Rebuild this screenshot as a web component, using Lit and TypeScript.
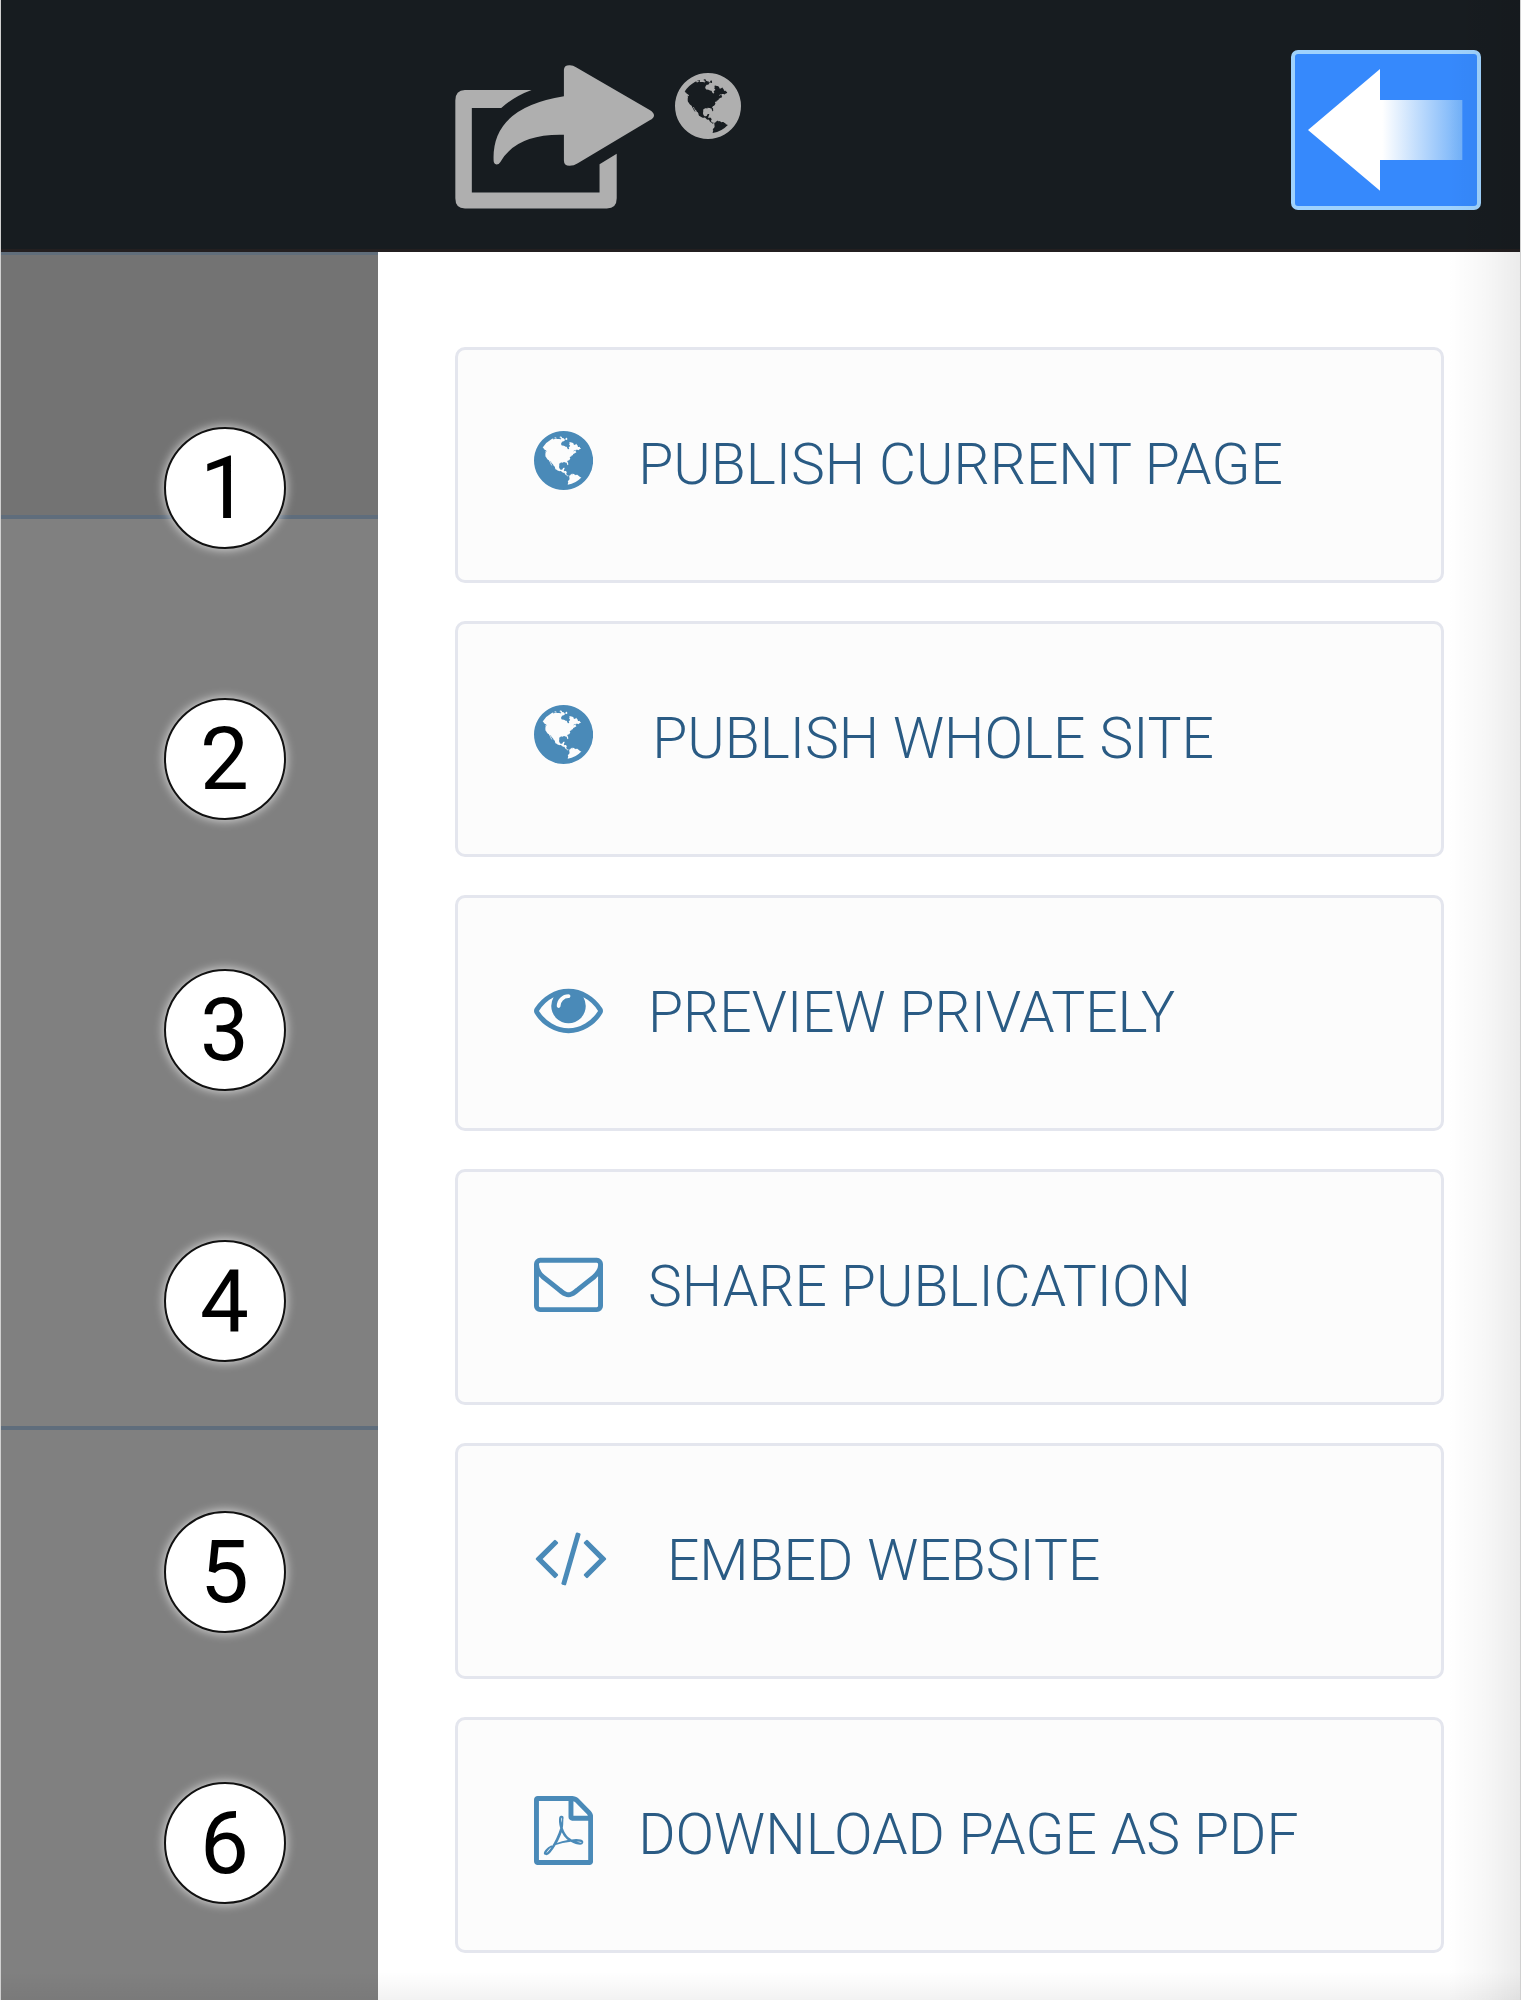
import { LitElement, html, svg, css, type SVGTemplateResult } from "lit";
import { customElement, property } from "lit/decorators.js";

interface Glyph {
  x: number;
  width: number;
  path: string;
}

/* Glyph outlines on a 1792-unit tall grid; x and width give the advance box. */
const GLYPHS: Record<string, Glyph> = {
  globe: {
    x: 128,
    width: 1536,
    path: "M896 128q209 0 385.5 103t279.5 279.5 103 385.5-103 385.5-279.5 279.5-385.5 103-385.5-103-279.5-279.5-103-385.5 103-385.5 279.5-279.5 385.5-103zm274 521q-2 1-9.5 9.5t-13.5 9.5q2 0 4.5-5t5-11 3.5-7q6-7 22-15 14-6 52-12 34-8 51 11-2-2 9.5-13t14.5-12q3-2 15-4.5t15-7.5l2-22q-12 1-17.5-7t-6.5-21q0 2-6 8 0-7-4.5-8t-11.5 1-9 1q-10-3-15-7.5t-8-16.5-4-15q-2-5-9.5-11t-9.5-10q-1-2-2.5-5.5t-3-6.5-4-5.5-5.5-2.5-7 5-7.5 10-4.5 5q-3-2-6-1.5t-4.5 1-4.5 3-5 3.5q-3 2-8.5 3t-8.5 2q15-5-1-11-10-4-16-3 9-4 7.5-12t-8.5-14h5q-1-4-8.5-8.5t-17.5-8.5-13-6q-8-5-34-9.5t-33-.5q-5 6-4.5 10.5t4 14 3.5 12.5q1 6-5.5 13t-6.5 12q0 7 14 15.5t10 21.5q-3 8-16 16t-16 12q-5 8-1.5 18.5t10.5 16.5q2 2 1.5 4t-3.5 4.5-5.5 4-6.5 3.5l-3 2q-11 5-20.5-6t-13.5-26q-7-25-16-30-23-8-29 1-5-13-41-26-25-9-58-4 6-1 0-15-7-15-19-12 3-6 4-17.5t1-13.5q3-13 12-23 1-1 7-8.5t9.5-13.5.5-6q35 4 50-11 5-5 11.5-17t10.5-17q9-6 14-5.5t14.5 5.5 14.5 5q14 1 15.5-11t-7.5-20q12 1 3-17-4-7-8-9-12-4-27 5-8 4 2 8-1-1-9.5 10.5t-16.5 17.5-16-5q-1-1-5.5-13.5t-9.5-13.5q-8 0-16 15 3-8-11-15t-24-8q19-12-8-27-7-4-20.5-5t-19.5 4q-5 7-5.5 11.5t5 8 10.5 5.5 11.5 4 8.5 3q14 10 8 14-2 1-8.5 3.5t-11.5 4.5-6 4q-3 4 0 14t-2 14q-5-5-9-17.5t-7-16.5q7 9-25 6l-10-1q-4 0-16 2t-20.5 1-13.5-8q-4-8 0-20 1-4 4-2-4-3-11-9.5t-10-8.5q-46 15-94 41 6 1 12-1 5-2 13-6.5t10-5.5q34-14 42-7l5-5q14 16 20 25-7-4-30-1-20 6-22 12 7 12 5 18-4-3-11.5-10t-14.5-11-15-5q-16 0-22 1-146 80-235 222 7 7 12 8 4 1 5 9t2.5 11 11.5-3q9 8 3 19 1-1 44 27 19 17 21 21 3 11-10 18-1-2-9-9t-9-4q-3 5 .5 18.5t10.5 12.5q-7 0-9.5 16t-2.5 35.5-1 23.5l2 1q-3 12 5.5 34.5t21.5 19.5q-13 3 20 43 6 8 8 9 3 2 12 7.5t15 10 10 10.5q4 5 10 22.5t14 23.5q-2 6 9.5 20t10.5 23q-1 0-2.5 1t-2.5 1q3 7 15.5 14t15.5 13q1 3 2 10t3 11 8 2q2-20-24-62-15-25-17-29-3-5-5.5-15.5t-4.5-14.5q2 0 6 1.5t8.5 3.5 7.5 4 2 3q-3 7 2 17.5t12 18.5 17 19 12 13q6 6 14 19.5t0 13.5q9 0 20 10.5t17 19.5q5 8 8 26t5 24q2 7 8.5 13.5t12.5 9.5l16 8 13 7q5 2 18.5 10.5t21.5 11.5q10 4 16 4t14.5-2.5 13.5-3.5q15-2 29 15t21 21q36 19 55 11-2 1 .5 7.5t8 15.5 9 14.5 5.5 8.5q5 6 18 15t18 15q6-4 7-9-3 8 7 20t18 10q14-3 14-32-31 15-49-18 0-1-2.5-5.5t-4-8.5-2.5-8.5 0-7.5 5-3q9 0 10-3.5t-2-12.5-4-13q-1-8-11-20t-12-15q-5 9-16 8t-16-9q0 1-1.5 5.5t-1.5 6.5q-13 0-15-1 1-3 2.5-17.5t3.5-22.5q1-4 5.5-12t7.5-14.5 4-12.5-4.5-9.5-17.5-2.5q-19 1-26 20-1 3-3 10.5t-5 11.5-9 7q-7 3-24 2t-24-5q-13-8-22.5-29t-9.5-37q0-10 2.5-26.5t3-25-5.5-24.5q3-2 9-9.5t10-10.5q2-1 4.5-1.5t4.5 0 4-1.5 3-6q-1-1-4-3-3-3-4-3 7 3 28.5-1.5t27.5 1.5q15 11 22-2 0-1-2.5-9.5t-.5-13.5q5 27 29 9 3 3 15.5 5t17.5 5q3 2 7 5.5t5.5 4.5 5-.5 8.5-6.5q10 14 12 24 11 40 19 44 7 3 11 2t4.5-9.5 0-14-1.5-12.5l-1-8v-18l-1-8q-15-3-18.5-12t1.5-18.5 15-18.5q1-1 8-3.5t15.5-6.5 12.5-8q21-19 15-35 7 0 11-9-1 0-5-3t-7.5-5-4.5-2q9-5 2-16 5-3 7.5-11t7.5-10q9 12 21 2 7-8 1-16 5-7 20.5-10.5t18.5-9.5q7 2 8-2t1-12 3-12q4-5 15-9t13-5l17-11q3-4 0-4 18 2 31-11 10-11-6-20 3-6-3-9.5t-15-5.5q3-1 11.5-.5t10.5-1.5q15-10-7-16-17-5-43 12zm-163 877q206-36 351-189-3-3-12.5-4.5t-12.5-3.5q-18-7-24-8 1-7-2.5-13t-8-9-12.5-8-11-7q-2-2-7-6t-7-5.5-7.5-4.5-8.5-2-10 1l-3 1q-3 1-5.5 2.5t-5.5 3-4 3 0 2.5q-21-17-36-22-5-1-11-5.5t-10.5-7-10-1.5-11.5 7q-5 5-6 15t-2 13q-7-5 0-17.5t2-18.5q-3-6-10.5-4.5t-12 4.5-11.5 8.5-9 6.5-8.5 5.5-8.5 7.5q-3 4-6 12t-5 11q-2-4-11.5-6.5t-9.5-5.5q2 10 4 35t5 38q7 31-12 48-27 25-29 40-4 22 12 26 0 7-8 20.5t-7 21.5q0 6 2 16z",
  },
  eye: {
    x: 0,
    width: 1792,
    path: "M1664 960q-152-236-381-353 61 104 61 225 0 185-131.5 316.5t-316.5 131.5-316.5-131.5-131.5-316.5q0-121 61-225-229 117-381 353 133 205 333.5 326.5t434.5 121.5 434.5-121.5 333.5-326.5zm-720-384q0-20-14-34t-34-14q-125 0-214.5 89.5t-89.5 214.5q0 20 14 34t34 14 34-14 14-34q0-86 61-147t147-61q20 0 34-14t14-34zm848 384q0 34-20 69-140 230-376.5 368.5t-499.5 138.5-499.5-139-376.5-368q-20-35-20-69t20-69q140-229 376.5-368t499.5-139 499.5 139 376.5 368q20 35 20 69z",
  },
  envelope: {
    x: 0,
    width: 1792,
    path: "M1664 1504v-768q-32 36-69 66-268 206-426 338-51 43-83 67t-86.5 48.5-102.5 24.5h-2q-48 0-102.5-24.5t-86.5-48.5-83-67q-158-132-426-338-37-30-69-66v768q0 13 9.5 22.5t22.5 9.5h1472q13 0 22.5-9.5t9.5-22.5zm0-1051v-24.5l-.5-13-3-12.5-5.5-9-9-7.5-14-2.5h-1472q-13 0-22.5 9.5t-9.5 22.5q0 168 147 284 193 152 401 317 6 5 35 29.5t46 37.5 44.5 31.5 50.5 27.5 43 9h2q20 0 43-9t50.5-27.5 44.5-31.5 46-37.5 35-29.5q208-165 401-317 54-43 100.5-115.5t46.5-131.5zm128-37v1088q0 66-47 113t-113 47h-1472q-66 0-113-47t-47-113v-1088q0-66 47-113t113-47h1472q66 0 113 47t47 113z",
  },
  code: {
    x: 0,
    width: 1920,
    path: "M617 1399l-50 50q-10 10-23 10t-23-10l-466-466q-10-10-10-23t10-23l466-466q10-10 23-10t23 10l50 50q10 10 10 23t-10 23l-393 393 393 393q10 10 10 23t-10 23zm591-1067l-373 1291q-4 13-15.5 19.5t-23.5 2.5l-62-17q-13-4-19.5-15.5t-2.5-24.5l373-1291q4-13 15.5-19.5t23.5-2.5l62 17q13 4 19.5 15.5t2.5 24.5zm657 651l-466 466q-10 10-23 10t-23-10l-50-50q-10-10-10-23t10-23l393-393-393-393q-10-10-10-23t10-23l50-50q10-10 23-10t23 10l466 466q10 10 10 23t-10 23z",
  },
  pdf: {
    x: 128,
    width: 1536,
    path: "M1596 380q28 28 48 76t20 88v1152q0 40-28 68t-68 28h-1344q-40 0-68-28t-28-68v-1600q0-40 28-68t68-28h896q40 0 88 20t76 48zm-444-244v376h376q-10-29-22-41l-313-313q-12-12-41-22zm384 1528v-1024h-416q-40 0-68-28t-28-68v-416h-768v1536h1280zm-514-593q33 26 84 56 59-7 117-7 147 0 177 49 16 22 2 52 0 1-1 2l-2 2v1q-6 38-71 38-48 0-115-20t-130-53q-221 24-392 83-153 262-242 262-15 0-28-7l-24-12q-1-1-6-5-10-10-6-36 9-40 56-91.5t132-96.5q14-9 23 6 2 2 2 4 52-85 107-197 68-136 104-262-24-82-30.5-159.5t6.5-127.5q11-40 42-40h22q23 0 35 15 18 21 9 68-2 6-4 8 1 3 1 8v30q-2 123-14 192 55 164 146 238zm-576 411q52-24 137-158-51 40-87.5 84t-49.5 74zm398-920q-15 42-2 132 1-7 7-44 0-3 7-43 1-4 4-8-1-1-1-2t-1-2q-1-22-13-36 0 1-1 2v2zm-124 661q135-54 284-81-2-1-13-9.5t-16-13.5q-76-67-127-176-27 86-83 197-30 56-45 83zm646-16q-24-24-140-24 76 28 124 28 14 0 18-1 0-1-2-3z",
  },
};

const glyph = (name: string): SVGTemplateResult => {
  const g = GLYPHS[name];
  return svg`<svg class="glyph" aria-hidden="true" viewBox="${g.x} 0 ${g.width} 1792"><path d="${g.path}"></path></svg>`;
};

interface Action {
  label: string;
  icon: string;
  spaced?: boolean;
}

const ACTIONS: Action[] = [
  { label: "PUBLISH CURRENT PAGE", icon: "globe" },
  { label: "PUBLISH WHOLE SITE", icon: "globe", spaced: true },
  { label: "PREVIEW PRIVATELY", icon: "eye" },
  { label: "SHARE PUBLICATION", icon: "envelope" },
  { label: "EMBED WEBSITE", icon: "code", spaced: true },
  { label: "DOWNLOAD PAGE AS PDF", icon: "pdf" },
];

@customElement("panel-header")
export class PanelHeader extends LitElement {
  static styles = css`
    :host {
      display: block;
    }
    .bar {
      box-sizing: border-box;
      display: flex;
      align-items: flex-start;
      justify-content: space-between;
      min-height: 252px;
      padding: 50px 39px 38px 454px;
      background: #171c20;
      border-bottom: 3px solid #231f20;
    }
    .title {
      display: flex;
      align-items: flex-start;
      gap: 20px;
      margin-top: 14px;
      fill: #afafaf;
    }
    .share {
      display: block;
      width: 200px;
      height: 145px;
    }
    .world {
      display: block;
      width: 66px;
      height: 66px;
      margin-top: 9px;
    }
    .back {
      box-sizing: border-box;
      width: 190px;
      height: 160px;
      padding: 0;
      border: 4px solid #9fd2fd;
      border-radius: 7px;
      background: #3689fc;
      cursor: pointer;
    }
    .arrow {
      display: block;
      width: 182px;
      height: 152px;
    }
  `;

  render() {
    return html`
      <header class="bar">
        <div class="title">
          <svg class="share" viewBox="74 70 606 438" aria-hidden="true">
            <path
              d="M104 148H306Q252 168 214 203H125V459H512V373L564 341V476Q564 507 534 507H104Q75 507 75 476V180Q75 148 104 148Z"
            ></path>
            <path
              d="M404 167V86Q405 73 420 73Q430 72 442 80L664 209Q677 217 677 225Q677 233 664 240L446 370Q434 378 421 378Q404 378 404 362V284Q260 280 211 367Q207 374 200 374Q191 373 191 362Q184 202 404 167Z"
            ></path>
          </svg>
          <svg class="world" viewBox="128 128 1536 1536" aria-hidden="true">
            <path d="${GLYPHS.globe.path}"></path>
          </svg>
        </div>
        <button class="back" type="button" aria-label="Back">
          <svg class="arrow" viewBox="78 70 546 456" aria-hidden="true">
            <defs>
              <linearGradient id="fade" gradientUnits="userSpaceOnUse" x1="340" y1="0" x2="580" y2="0">
                <stop offset="0" stop-color="#fff"></stop>
                <stop offset="1" stop-color="#72b1f9"></stop>
              </linearGradient>
            </defs>
            <path fill="url(#fade)" d="M117 298L333 115V208H580V388H333V480Z"></path>
          </svg>
        </button>
      </header>
    `;
  }
}

@customElement("step-rail")
export class StepRail extends LitElement {
  @property({ type: Number }) count = 0;

  static styles = css`
    :host {
      display: grid;
    }
    .backdrop,
    .steps {
      grid-area: 1 / 1;
    }
    .backdrop {
      display: grid;
      grid-template-rows: 267px 911px 1fr;
      background: #808080;
    }
    .band {
      border-bottom: 4px solid #5f6d7c;
    }
    .band.first {
      border-top: 3px solid #606d7a;
      background: #737373;
    }
    .steps {
      display: flex;
      flex-direction: column;
      align-items: center;
      gap: 149px;
      margin: 0;
      padding: 175px 0 0 70px;
      list-style: none;
    }
    .step {
      box-sizing: border-box;
      display: flex;
      align-items: center;
      justify-content: center;
      width: 122px;
      height: 122px;
      border: 2px solid #111;
      border-radius: 50%;
      background: #fff;
      box-shadow: 0 0 10px 1px rgba(255, 255, 255, 0.65);
      color: #000;
      font: 400 87px/118px Roboto, "Liberation Sans", sans-serif;
    }
  `;

  render() {
    return html`
      <div class="backdrop">
        <div class="band first"></div>
        <div class="band"></div>
      </div>
      <ol class="steps">
        ${Array.from({ length: this.count }, (_, i) => html`<li class="step">${i + 1}</li>`)}
      </ol>
    `;
  }
}

@customElement("action-list")
export class ActionList extends LitElement {
  @property({ attribute: false }) actions: Action[] = [];

  static styles = css`
    :host {
      display: block;
    }
    .list {
      display: flex;
      flex-direction: column;
      gap: 38px;
      margin: 0;
      padding: 95px 76px 46px 77px;
      list-style: none;
    }
    .item {
      display: flex;
    }
    .action {
      flex: 1;
      box-sizing: border-box;
      display: flex;
      align-items: center;
      gap: 45px;
      min-height: 236px;
      padding: 0 40px 0 76px;
      border: 3px solid #e4e6ee;
      border-radius: 10px;
      background: #fcfcfc;
      color: #2a5b84;
      font: 300 57px/70px Roboto, "Liberation Sans", sans-serif;
      text-align: left;
      cursor: pointer;
    }
    .action.spaced {
      gap: 59px;
    }
    .glyph {
      flex: none;
      display: block;
      height: 69px;
      margin-bottom: 10px;
      fill: #4a8ab8;
    }
  `;

  render() {
    return html`
      <ul class="list">
        ${this.actions.map(
          (a) => html`
            <li class="item">
              <button class="action ${a.spaced ? "spaced" : ""}" type="button">
                ${glyph(a.icon)}<span>${a.label}</span>
              </button>
            </li>
          `,
        )}
      </ul>
    `;
  }
}

@customElement("app-root")
export class AppRoot extends LitElement {
  static styles = css`
    :host {
      display: block;
    }
    .page {
      position: relative;
      box-sizing: border-box;
      display: flex;
      flex-direction: column;
      min-height: 100vh;
      border: solid #d0d0d0;
      border-width: 0 1px;
      background: #fff;
    }
    .body {
      flex: 1;
      display: grid;
      grid-template-columns: 377px minmax(0, 1fr);
    }
    .shade-right,
    .shade-bottom {
      position: absolute;
      right: 0;
      bottom: 0;
      pointer-events: none;
    }
    .shade-right {
      top: 0;
      width: 72px;
      background: linear-gradient(to right, rgba(0, 0, 0, 0), rgba(0, 0, 0, 0.03) 50%, rgba(0, 0, 0, 0.08));
    }
    .shade-bottom {
      left: 0;
      height: 28px;
      background: linear-gradient(to bottom, rgba(0, 0, 0, 0), rgba(0, 0, 0, 0.05));
    }
  `;

  render() {
    return html`
      <div class="page">
        <panel-header></panel-header>
        <main class="body">
          <step-rail .count=${ACTIONS.length}></step-rail>
          <action-list .actions=${ACTIONS}></action-list>
        </main>
        <div class="shade-right"></div>
        <div class="shade-bottom"></div>
      </div>
    `;
  }
}
